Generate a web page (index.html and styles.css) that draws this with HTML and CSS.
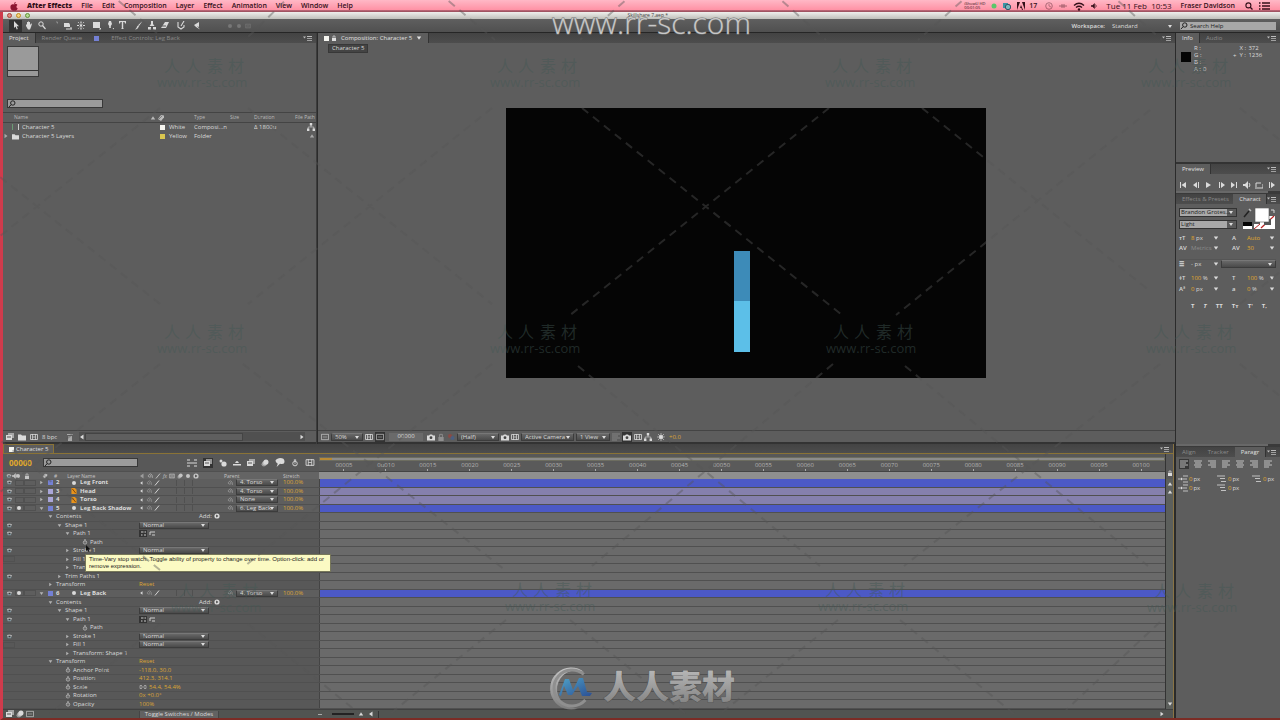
FILE: index.html
```html
<!DOCTYPE html>
<html lang="en">
<head>
<meta charset="utf-8">
<title>Skillshare 7.aep</title>
<link rel="stylesheet" href="styles.css">
</head>
<body>
<svg class="sprite" aria-hidden="true">
  <symbol id="right" viewBox="0 0 6 6"><path d="M1.5 .8 4.5 3 1.5 5.2z"/></symbol>
  <symbol id="down" viewBox="0 0 6 6"><path d="M.8 1.5h4.4L3 4.8z"/></symbol>
  <symbol id="up" viewBox="0 0 6 6"><path d="M.8 4.5h4.4L3 1.2z"/></symbol>
  <symbol id="left" viewBox="0 0 6 6"><path d="M4.5 .5v5L1 3z"/></symbol>
  <symbol id="eye" viewBox="0 0 8 6"><path d="M1 1.2Q4-.4 7 1.6V3H1z" opacity=".8"/><path d="M1 3h5v2H2z" fill="#8ba3ae"/><circle cx="4" cy="3" r="1" fill="#333"/></symbol>
  <symbol id="sound" viewBox="0 0 8 8"><path d="M0 3h2l3-3v8L2 5H0z"/><path d="M6 2q2 2 0 4" fill="none" stroke="currentColor"/></symbol>
  <symbol id="lock" viewBox="0 0 6 6"><path d="M1 3h4v3H1z"/><path d="M2 3V1h2v2" fill="none" stroke="currentColor" stroke-width=".7"/></symbol>
  <symbol id="watch" viewBox="0 0 6 7"><circle cx="3" cy="4" r="2" fill="none" stroke="currentColor" stroke-width=".8"/><path d="M2 .5h2v1H2zM2.7 2.5h.6v2h-.6z"/></symbol>
  <symbol id="dot" viewBox="0 0 6 6"><circle cx="3" cy="3" r="2"/></symbol>
  <symbol id="ai" viewBox="0 0 6 7"><path fill="#e8941c" d="M0 0h4l2 2v5H0z"/><path d="M1 1l4 5" stroke="#713b09"/></symbol>
  <symbol id="whip" viewBox="0 0 6 6"><path d="M3 3q1-1 1 .3T2 4 2 1.6t3 .4.2 3" fill="none" stroke="currentColor" stroke-width=".6"/></symbol>
  <symbol id="add" viewBox="0 0 6 6"><circle cx="3" cy="3" r="2.6"/><path d="M2.2 1.4 4.4 3 2.2 4.6z" fill="#444"/></symbol>
  <symbol id="find" viewBox="0 0 8 8"><circle cx="4.8" cy="3" r="2.2" fill="none" stroke="currentColor"/><path d="M3.2 4.6.8 7.2" stroke="currentColor"/></symbol>
  <symbol id="fly" viewBox="0 0 9 6"><path d="M0 1.5h3L1.5 3.5zM4 1h5v1H4zM4 3h5v.8H4zM4 5h5v.8H4z"/></symbol>
  <symbol id="tag" viewBox="0 0 8 8"><path d="M1 5 4 1l3 .5v2L4 7z"/><path d="M2 5l3-3" stroke="#555" stroke-width=".6"/></symbol>
  <symbol id="folder" viewBox="0 0 8 7"><path d="M0 1h3l1 1h4v5H0z"/></symbol>
  <symbol id="tree" viewBox="0 0 8 8"><path d="M2.8 0h2.4v2.4H2.8zM0 5.5h2.4V8H0zM5.6 5.5H8V8H5.6z"/><path d="M4 2v2M1.2 6V4h5.6v2" fill="none" stroke="currentColor" stroke-width=".6"/></symbol>
  <symbol id="film" viewBox="0 0 8 8"><path d="M.5 1.500h7v5h-7z" fill="none" stroke="currentColor" stroke-width=".8"/><path d="M2.500 1v6M5.500 1v6M2.500 4h3" stroke="currentColor" stroke-width=".7"/></symbol>
  <symbol id="solids" viewBox="0 0 8 8"><path d="M2 0h6v5H2z" opacity=".6"/><path d="M0 2h6v5H0z"/><path d="M1 4h4" stroke="#555"/></symbol>
  <symbol id="screen" viewBox="0 0 9 8"><path d="M.5 1h8v6h-8z" fill="none" stroke="currentColor" stroke-width=".7"/><path d="M2 4h5" stroke="currentColor" stroke-width=".5"/></symbol>
  <symbol id="blur" viewBox="0 0 8 8"><circle cx="5" cy="3" r="2.5"/><circle cx="4" cy="4" r="2.5" opacity=".6"/><circle cx="2.8" cy="5.2" r="2.3" opacity=".5"/></symbol>
  <symbol id="cam" viewBox="0 0 8 7"><path d="M0 2h2l1-1h2l1 1h2v5H0z"/><circle cx="4" cy="4.2" r="1.4" fill="#444"/></symbol>
  <symbol id="slash" viewBox="0 0 6 7"><path d="M.6 6.4 5.4.6" stroke="currentColor" stroke-width="1.1"/></symbol>
  <symbol id="lines" viewBox="0 0 8 8"><path d="M0 1h8M0 3h6M0 5h8M0 7h5" stroke="currentColor" stroke-width=".8"/></symbol>
  <symbol id="lines-c" viewBox="0 0 8 8"><path d="M0 1h8M1 3h6M0 5h8M1 7h6" stroke="currentColor" stroke-width=".8"/></symbol>
  <symbol id="lines-r" viewBox="0 0 8 8"><path d="M0 1h8M2 3h6M0 5h8M3 7h5" stroke="currentColor" stroke-width=".8"/></symbol>
  <symbol id="ind-l" viewBox="0 0 10 8"><path d="M0 4h4M5 1h5M5 4h4M5 7h5" stroke="currentColor" stroke-width=".8"/><path d="M3 2.5 5 4 3 5.5z"/></symbol>
  <symbol id="ind-t" viewBox="0 0 10 8"><path d="M0 1h8M3 3.5h5M4 6.5h5" stroke="currentColor" stroke-width=".8"/></symbol>
  <symbol id="paths" viewBox="0 0 16 7"><path fill="#333" d="M0 0h8v7H0z"/><path d="M2 2h2.5M5.5 2H7M2 5h1.5M5 5h2M11 2h5M11 2v3M13 5h3" stroke="#ccc"/></symbol>
</svg>

<header class="menubar">
  <svg class="apple" viewBox="0 0 8 9"><path fill="#8c1430" d="M4 2.6C5.5 1.6 7 2.2 7.4 3 6 4 6.200 5.700 7.700 6.300 7 8.500 5.800 9.200 4 8.400 2 9.300.4 7.400.4 5 .4 2.600 2.500 1.800 4 2.600zM4 2C4 .8 5 0 5.800 0 5.800 1.200 5 2 4 2z"/></svg>
  <nav class="menus">
    <button class="strong">After Effects</button><button>File</button><button>Edit</button><button>Composition</button><button>Layer</button><button>Effect</button><button>Animation</button><button>View</button><button>Window</button><button>Help</button>
  </nav>
  <div class="status">
    <span class="rec">iShowU HD<br>00:01:05</span>
    <svg class="i6" viewBox="0 0 6 6"><circle cx="3" cy="3" r="2.5" fill="#5cc66a"/></svg>
    <svg class="i8" viewBox="0 0 8 8"><path fill="#3b93a4" d="M0 1h5v5H0z"/><circle cx="5" cy="5" r="2.700" fill="#79b8be" stroke="#356"/></svg>
    <span class="adobe"><svg class="i8" viewBox="0 0 8 8"><path d="M0 0h3L0 8zM5 0h3v8zM4 3l2 5H5L4.400 6H3z"/></svg>17</span>
    <svg class="i8 pale" viewBox="0 0 8 8"><circle cx="4" cy="4" r="3.300" fill="none" stroke="currentColor" stroke-width=".8"/><path d="M4 2v2l2 1" fill="none" stroke="currentColor" stroke-width=".7"/></svg>
    <svg class="i8 pale" viewBox="0 0 8 8"><path d="M0 4h8M3 2v4M5 2v4" stroke="currentColor" stroke-width=".9"/></svg>
    <svg class="wifi" viewBox="0 0 12 9"><path d="M1 3.500q5-4.500 10 0M3 5.500q3-2.500 6 0" fill="none" stroke="currentColor" stroke-width="1.400"/><circle cx="6" cy="7.500" r="1.200"/></svg>
    <svg class="i6"><use href="#sound"/></svg>
    <span class="clock">Tue 11 Feb&nbsp; 10:53</span>
    <span class="user">Fraser Davidson</span>
    <svg class="i8" viewBox="0 0 8 8"><circle cx="3.400" cy="3.400" r="2.500" fill="none" stroke="currentColor" stroke-width="1.100"/><path d="M5.200 5.200 7.500 7.500" stroke="currentColor" stroke-width="1.300"/></svg>
    <svg class="list" viewBox="0 0 11 8"><path d="M0 1h1.500M3 1h8M0 4h1.500M3 4h8M0 7h1.500M3 7h8" stroke="currentColor" stroke-width="1.300"/></svg>
  </div>
</header>

<div class="window">
  <div class="titlebar">
    <span class="lights"><i class="red"></i><i class="amber"></i><i class="green"></i></span>
    <span class="filename">Skillshare 7.aep *</span>
  </div>

  <div class="toolbar">
    <button class="tool on" aria-label="Selection"><svg viewBox="0 0 8 9"><path d="M2 0v7l1.600-1.400L4.700 8.500l1.100-.5L4.700 5.200H7z"/></svg></button>
    <button class="tool" aria-label="Hand"><svg viewBox="0 0 8 9"><path d="M1 3l1 1V1h1v2.500V.4h1v3V1h1v3l1-1.500 1 .3L6 6 5 8.500H3L1 5z"/></svg></button>
    <button class="tool" aria-label="Zoom"><svg viewBox="0 0 8 9"><circle cx="3" cy="3" r="2.200" fill="none" stroke="currentColor"/><path d="M4.500 4.500 7.500 8" stroke="currentColor" stroke-width="1.200"/></svg></button>
    <button class="tool dim" aria-label="Rotate"><svg viewBox="0 0 8 9"><path d="M5 1h1.500v1.500" stroke="currentColor" fill="none"/></svg></button>
    <button class="tool" aria-label="Camera"><svg viewBox="0 0 8 9"><path d="M0 2h5l1 1.500V6H0z"/><path d="M2 8h6M7 6v2" stroke="currentColor"/></svg></button>
    <button class="tool" aria-label="Pan behind"><svg viewBox="0 0 8 9"><path d="M0 4.500h8M4 .5v8" stroke="currentColor" stroke-width="1.200" stroke-dasharray="2 1"/><path d="M1 1l6 7M7 1 1 8" stroke="currentColor" stroke-width=".8" stroke-dasharray="1.500 1"/></svg></button>
    <button class="tool gap" aria-label="Rectangle"><svg viewBox="0 0 8 9"><path d="M0 1h7v6H0zM7 7h1v1.500H6z"/></svg></button>
    <button class="tool" aria-label="Pen"><svg viewBox="0 0 8 9"><path d="M3 0h2l1 3-1.200 2v2H3.200V5L2 3zM6.500 7H8v1.500z"/></svg></button>
    <button class="tool" aria-label="Type"><svg viewBox="0 0 8 9"><path d="M0 0h7v2.500H6L5.500 1H4.200v6.200L5 8H2l.8-.8V1H1.500L1 2.500H0z"/></svg></button>
    <button class="tool gap" aria-label="Brush"><svg viewBox="0 0 8 9"><path d="M7.500 0 4 5 3 4.200zM3 4.500 4 5.500Q3 8 0 8.500 2 7 2 5.500z"/></svg></button>
    <button class="tool" aria-label="Clone stamp"><svg viewBox="0 0 8 9"><path d="M3 0h2v3l1.500 2H1.500L3 3zM0 6h3v2.500H0zM5 6h3v2.500H5z"/></svg></button>
    <button class="tool" aria-label="Eraser"><svg viewBox="0 0 8 9"><path d="M4 1h4L5 7H0z"/><path d="M1 5h4" stroke="#555"/></svg></button>
    <button class="tool gap" aria-label="Roto brush"><svg viewBox="0 0 8 9"><path d="M1 1v5l3 2 3-2V4M7 0 4 5" fill="none" stroke="currentColor" stroke-width="1.100"/></svg></button>
    <button class="tool gap" aria-label="Puppet pin"><svg viewBox="0 0 8 9"><path d="M1 4 6 1v5L4 5 7 8.500 3 6z"/></svg></button>
    <span class="axes"><svg class="i6"><use href="#dot"/></svg><svg class="i6"><use href="#dot"/></svg><svg class="i6"><use href="#film"/></svg></span>
    <label class="space" for="ws">Workspace:</label>
    <span class="drop ws"><select id="ws"><option>Standard</option></select></span>
    <label class="help"><svg class="i8"><use href="#find"/></svg><input type="search" value="Search Help" aria-label="Search Help"></label>
  </div>

  <main class="desk">
    <section class="panel project">
      <div class="tabs">
        <button class="tab on">Project</button><button class="tab">Render Queue</button>
        <button class="tab"><i class="sw blue"></i></button><button class="tab">Effect Controls: Leg Back</button>
        <svg class="fly"><use href="#fly"/></svg>
      </div>
      <div class="preview-thumb"><i class="thumb"></i></div>
      <label class="search"><svg class="i8"><use href="#find"/></svg><input type="search" aria-label="Search project"></label>
      <table class="files">
        <colgroup><col class="c-name"><col class="c-label"><col class="c-type"><col class="c-size"><col class="c-dur"><col></colgroup>
        <thead><tr><th class="pad">Name</th><th><svg class="i6"><use href="#up"/></svg><svg class="i8"><use href="#tag"/></svg></th><th>Type</th><th>Size</th><th>Duration</th><th>File Path</th></tr></thead>
        <tbody>
          <tr><td><span class="comp-ic"></span>Character 5</td><td><i class="sw white"></i>White</td><td>Composi...n</td><td></td><td>Δ 1800u</td><td class="end"><svg class="i8"><use href="#tree"/></svg></td></tr>
          <tr><td><svg class="i6 faint"><use href="#right"/></svg><svg class="i8 fold"><use href="#folder"/></svg>Character 5 Layers</td><td><i class="sw yellow"></i>Yellow</td><td>Folder</td><td></td><td></td><td class="end"><svg class="i6 faint"><use href="#up"/></svg></td></tr>
        </tbody>
      </table>
      <div class="footbar">
        <svg class="i8"><use href="#solids"/></svg><svg class="i8"><use href="#folder"/></svg><svg class="i8"><use href="#film"/></svg>
        <button>8 bpc</button><svg class="i8 bin" viewBox="0 0 8 8"><path d="M1 1h6v1H1zM2 3h4v5H2z" opacity=".6"/></svg>
        <span class="scroll"><svg class="i6"><use href="#left"/></svg><i></i><svg class="i6"><use href="#right"/></svg></span>
      </div>
    </section>

    <section class="panel comp">
      <div class="tabs">
        <button class="tab on"><i class="sw white"></i><svg class="i6"><use href="#lock"/></svg><span class="sp">Composition: Character 5</span> <svg class="i6 sp"><use href="#down"/></svg></button>
        <svg class="fly"><use href="#fly"/></svg>
      </div>
      <div class="crumbs"><button>Character 5</button></div>
      <div class="viewer"><div class="canvas"><div class="leg"></div></div></div>
      <div class="footbar">
        <svg class="i8"><use href="#screen"/></svg>
        <span class="drop w30"><select aria-label="Magnification"><option>50%</option></select></span>
        <svg class="i8"><use href="#film"/></svg><span class="boxed"><svg class="i8"><use href="#screen"/></svg></span>
        <button class="frame">00000</button>
        <svg class="i8"><use href="#cam"/></svg><svg class="i8 dim"><use href="#lock"/></svg><svg class="i8" viewBox="0 0 8 8"><circle cx="3" cy="3" r="2" fill="#8b4a45"/><circle cx="5.500" cy="5" r="2" fill="#4b5f80"/></svg>
        <span class="drop w41"><select aria-label="Resolution"><option>(Half)</option></select></span>
        <svg class="i8"><use href="#cam"/></svg><svg class="i8"><use href="#film"/></svg>
        <span class="drop w52"><select aria-label="View"><option>Active Camera</option></select></span>
        <span class="drop w34"><select aria-label="View layout"><option>1 View</option></select></span>
        <svg class="i8 dim"><use href="#lines"/></svg><span class="boxed"><svg class="i8"><use href="#cam"/></svg></span><svg class="i8"><use href="#film"/></svg><svg class="i8"><use href="#tree"/></svg>
        <svg class="i8 sun" viewBox="0 0 8 8"><circle cx="4" cy="4" r="2"/><path d="M4 0v8M0 4h8M1 1l6 6M7 1 1 7" stroke="currentColor" stroke-width=".6"/></svg><span class="gold">+0.0</span>
      </div>
    </section>

    <aside class="panel side">
      <div class="tabs"><button class="tab on">Info</button><button class="tab">Audio</button><svg class="fly"><use href="#fly"/></svg></div>
      <div class="info">
        <i class="black"></i>
        <dl><dt>R :</dt><dd></dd><dt>G :</dt><dd></dd><dt>B :</dt><dd></dd><dt>A :</dt><dd>0</dd></dl>
        <span class="cross">+</span>
        <dl class="xy"><dt>X :</dt><dd>372</dd><dt>Y :</dt><dd>1236</dd></dl>
      </div>
      <div class="tabs ruled"><button class="tab on">Preview</button><svg class="fly"><use href="#fly"/></svg></div>
      <div class="transport">
        <button aria-label="First frame"><svg viewBox="0 0 8 8"><path d="M0 1h1v6H0zM6 1v6L1.500 4z"/></svg></button>
        <button aria-label="Previous frame"><svg viewBox="0 0 8 8"><path d="M4 1v6L0 4zM5 1h1v6H5z"/></svg></button>
        <button aria-label="Play"><svg viewBox="0 0 8 8"><path d="M1 1v6l5-3z"/></svg></button>
        <button aria-label="Next frame"><svg viewBox="0 0 8 8"><path d="M1 1h1v6H1zM3 1v6l4-3z"/></svg></button>
        <button aria-label="Last frame"><svg viewBox="0 0 8 8"><path d="M1 1v6l4-3zM6 1h1v6H6z"/></svg></button>
        <button aria-label="Audio"><svg><use href="#sound"/></svg></button>
        <button aria-label="Loop"><svg viewBox="0 0 8 8"><path d="M1 6V2h5M0 7h8V3" fill="none" stroke="currentColor"/></svg></button>
        <button aria-label="RAM preview"><svg viewBox="0 0 8 8"><path d="M1 1h1v6H1zM3 1v6l4-3z"/></svg></button>
      </div>
      <div class="thinbar"><i></i></div>
      <div class="tabs"><button class="tab">Effects &amp; Presets</button><button class="tab on">Charact</button><svg class="fly"><use href="#fly"/></svg></div>
      <div class="char">
        <div class="fonts">
          <div class="faces">
            <span class="drop pale-drop"><select aria-label="Font family"><option>Brandon Grotes...</option></select></span>
            <span class="drop pale-drop"><select aria-label="Font style"><option>Light</option></select></span>
          </div>
          <svg class="swatches" viewBox="0 0 34 22"><path d="M2 9 7 3" stroke="#222" stroke-width="1.500"/><path d="M7 1 9 3" stroke="#bbb" stroke-width="1.500"/><path fill="#fff" d="M18 8h15v13H18z"/><path d="M19 20 32 8" stroke="#b22" stroke-width="1.200"/><path fill="#555" d="M22 11h7v6H22z"/><path fill="#fff" stroke="#555" stroke-width=".6" d="M13 0h14v14H13z"/><path fill="#050505" d="M1 14h9v4H1z"/><path fill="#fff" d="M1 18h9v3H1zM12 16h6v5H12z"/><path d="M12 21l6-5" stroke="#b22"/><path d="M29 2h3v3" fill="none" stroke="#ddd"/></svg>
        </div>
        <div class="pairs">
          <b>тT</b><span><u>8</u> px</span><svg class="i6"><use href="#down"/></svg><b>A</b><span><u>Auto</u></span><svg class="i6"><use href="#down"/></svg>
          <b>AV</b><span class="faded">Metrics</span><svg class="i6"><use href="#down"/></svg><b>AV</b><span><u>30</u></span><svg class="i6"><use href="#down"/></svg>
        </div>
        <div class="stroke"><b>☰</b><span>- px</span><svg class="i6"><use href="#down"/></svg><span class="drop"><select aria-label="Stroke order"><option></option></select></span></div>
        <div class="pairs low">
          <b>‡T</b><span><u>100</u> %</span><svg class="i6"><use href="#down"/></svg><b>T</b><span><u>100</u> %</span><svg class="i6"><use href="#down"/></svg>
          <b>Aª</b><span><u>0</u> px</span><svg class="i6"><use href="#down"/></svg><b>a</b><span><u>0</u> %</span><svg class="i6"><use href="#down"/></svg>
        </div>
        <div class="faux"><button>T</button><button><em>T</em></button><button>TT</button><button>Tт</button><button>T'</button><button>T,</button></div>
      </div>
    </aside>
  </main>

  <div class="lower">
    <section class="timeline">
      <div class="tabs"><button class="tab on"><i class="sw white"></i>Character 5</button><svg class="fly"><use href="#fly"/></svg></div>
      <div class="thead">
        <div class="left">
          <div class="tools">
            <span class="time">00000</span>
            <label class="search"><svg class="i8"><use href="#find"/></svg><input type="search" aria-label="Search layers"></label>
            <span class="icons">
              <svg viewBox="0 0 10 8"><path d="M0 1h3M0 4h10M0 7h3M7 1h3M7 7h3" stroke="currentColor"/></svg><span class="boxed"><svg class="i8"><use href="#solids"/></svg></span><svg class="i8" viewBox="0 0 8 8"><circle cx="2" cy="2" r="1.500"/><circle cx="5" cy="5" r="2.600"/></svg>
              <svg class="i8" viewBox="0 0 8 8"><path d="M0 5h8v1.500H0zM2 4q2-4 4 0z"/></svg><svg class="i8"><use href="#solids"/></svg><svg class="i8"><use href="#blur"/></svg>
              <svg class="i10" viewBox="0 0 8 8"><path d="M4 0q4 0 4 3T4 5L1 8 2 5Q0 4 0 2.500T4 0z"/></svg><svg class="i8"><use href="#watch"/></svg><svg class="i10"><use href="#film"/></svg>
            </span>
          </div>
          <div class="cols row-grid">
            <span class="av"><svg class="i6"><use href="#eye"/></svg><svg class="i6"><use href="#sound"/></svg></span><span><svg class="i6"><use href="#dot"/></svg></span><span><svg class="i6"><use href="#lock"/></svg></span>
            <span class="nm"><svg class="i6"><use href="#tag"/></svg><span>#</span><span class="title">Layer Name</span></span>
            <span class="sws"><svg class="i6 faint"><use href="#left"/></svg><svg class="i6"><use href="#whip"/></svg><svg class="i6"><use href="#slash"/></svg><em>fx</em><svg class="i6"><use href="#film"/></svg><svg class="i6"><use href="#blur"/></svg><svg class="i6"><use href="#dot"/></svg><svg class="i6"><use href="#add"/></svg></span>
            <span>Parent</span><span>Stretch</span>
          </div>
        </div>
        <div class="ruler">
          <div class="work"></div>
          <div class="ticks"><span>00005</span><span>0u010</span><span>00015</span><span>00020</span><span>00025</span><span>00030</span><span>00035</span><span>00040</span><span>00045</span><span>00050</span><span>00055</span><span>00060</span><span>00065</span><span>00070</span><span>00075</span><span>00080</span><span>00085</span><span>00090</span><span>00095</span><span>00100</span></div>
          <div class="band"></div>
        </div>
        <div class="gutter"><svg class="i6"><use href="#lock"/></svg></div>
      </div>

      <div class="body">
        <div class="rows">
          <div class="row row-grid layer"><span><svg class="eye"><use href="#eye"/></svg></span><span class="cell"></span><span class="cell"></span><span class="nm l0"><svg class="i6"><use href="#right"/></svg><i class="sw blue"></i><b>2</b><svg class="i6"><use href="#dot"/></svg><strong>Leg Front</strong></span><span class="sws"><svg class="i6"><use href="#left"/></svg><svg class="i6"><use href="#whip"/></svg><svg class="i6"><use href="#slash"/></svg><i class="cells"></i></span><span class="par"><svg class="i6"><use href="#whip"/></svg><span class="drop"><select aria-label="Parent of Leg Front"><option>4. Torso</option></select></span></span><span class="gold">100.0%</span><span class="lane bar"></span></div>
          <div class="row row-grid layer"><span><svg class="eye"><use href="#eye"/></svg></span><span class="cell"></span><span class="cell"></span><span class="nm l0"><svg class="i6"><use href="#right"/></svg><i class="sw lilac"></i><b>3</b><svg class="i6"><use href="#ai"/></svg><strong>Head</strong></span><span class="sws"><svg class="i6"><use href="#left"/></svg><svg class="i6"><use href="#whip"/></svg><svg class="i6"><use href="#slash"/></svg><i class="cells"></i></span><span class="par"><svg class="i6"><use href="#whip"/></svg><span class="drop"><select aria-label="Parent of Head"><option>4. Torso</option></select></span></span><span class="gold">100.0%</span><span class="lane soft"></span></div>
          <div class="row row-grid layer"><span><svg class="eye"><use href="#eye"/></svg></span><span class="cell"></span><span class="cell"></span><span class="nm l0"><svg class="i6"><use href="#right"/></svg><i class="sw lilac"></i><b>4</b><svg class="i6"><use href="#ai"/></svg><strong>Torso</strong></span><span class="sws"><svg class="i6"><use href="#left"/></svg><svg class="i6"><use href="#whip"/></svg><svg class="i6"><use href="#slash"/></svg><i class="cells"></i></span><span class="par"><svg class="i6"><use href="#whip"/></svg><span class="drop"><select aria-label="Parent of Torso"><option>None</option></select></span></span><span class="gold">100.0%</span><span class="lane soft"></span></div>
          <div class="row row-grid layer"><span><svg class="eye"><use href="#eye"/></svg></span><span class="cell"><svg class="i6"><use href="#dot"/></svg></span><span class="cell"></span><span class="nm l0"><svg class="i6"><use href="#down"/></svg><i class="sw blue"></i><b>5</b><svg class="i6"><use href="#dot"/></svg><strong>Leg Back Shadow</strong></span><span class="sws"><svg class="i6"><use href="#left"/></svg><svg class="i6"><use href="#whip"/></svg><svg class="i6"><use href="#slash"/></svg><i class="cells"></i></span><span class="par"><svg class="i6"><use href="#whip"/></svg><span class="drop"><select aria-label="Parent of Leg Back Shadow"><option>6. Leg Back</option></select></span></span><span class="gold">100.0%</span><span class="lane bar"></span></div>
          <div class="row row-grid"><span></span><span></span><span></span><span class="nm l1"><svg class="i6"><use href="#down"/></svg>Contents</span><span class="adds">Add: <svg class="i6"><use href="#add"/></svg></span><span></span><span></span><span class="lane"></span></div>
          <div class="row row-grid"><span><svg class="eye"><use href="#eye"/></svg></span><span></span><span></span><span class="nm l2"><svg class="i6"><use href="#down"/></svg>Shape 1</span><span class="drop mode"><select aria-label="Shape 1 mode"><option>Normal</option></select></span><span></span><span></span><span class="lane"></span></div>
          <div class="row row-grid"><span><svg class="eye"><use href="#eye"/></svg></span><span></span><span></span><span class="nm l3"><svg class="i6"><use href="#down"/></svg>Path 1</span><span><svg class="paths"><use href="#paths"/></svg></span><span></span><span></span><span class="lane"></span></div>
          <div class="row row-grid"><span></span><span></span><span></span><span class="nm l4"><svg class="i6 sw-ic"><use href="#watch"/></svg>Path</span><span></span><span></span><span></span><span class="lane"></span></div>
          <div class="row row-grid"><span><svg class="eye"><use href="#eye"/></svg></span><span></span><span></span><span class="nm l3"><svg class="i6"><use href="#right"/></svg>Stroke 1</span><span class="drop mode"><select aria-label="Stroke 1 mode"><option>Normal</option></select></span><span></span><span></span><span class="lane"></span></div>
          <div class="row row-grid"><span class="cell"></span><span></span><span></span><span class="nm l3"><svg class="i6"><use href="#right"/></svg>Fill 1</span><span></span><span></span><span></span><span class="lane"></span></div>
          <div class="row row-grid"><span></span><span></span><span></span><span class="nm l3"><svg class="i6"><use href="#right"/></svg>Transform: Shape 1</span><span></span><span></span><span></span><span class="lane"></span></div>
          <div class="row row-grid"><span><svg class="eye"><use href="#eye"/></svg></span><span></span><span></span><span class="nm l2"><svg class="i6"><use href="#right"/></svg>Trim Paths 1</span><span></span><span></span><span></span><span class="lane"></span></div>
          <div class="row row-grid"><span></span><span></span><span></span><span class="nm l1"><svg class="i6"><use href="#right"/></svg>Transform</span><span class="gold">Reset</span><span></span><span></span><span class="lane"></span></div>
          <div class="row row-grid layer"><span><svg class="eye"><use href="#eye"/></svg></span><span class="cell"><svg class="i6"><use href="#dot"/></svg></span><span class="cell"></span><span class="nm l0"><svg class="i6"><use href="#down"/></svg><i class="sw blue"></i><b>6</b><svg class="i6"><use href="#dot"/></svg><strong>Leg Back</strong></span><span class="sws"><svg class="i6"><use href="#left"/></svg><svg class="i6"><use href="#whip"/></svg><svg class="i6"><use href="#slash"/></svg><i class="cells"></i></span><span class="par"><svg class="i6"><use href="#whip"/></svg><span class="drop"><select aria-label="Parent of Leg Back"><option>4. Torso</option></select></span></span><span class="gold">100.0%</span><span class="lane bar"></span></div>
          <div class="row row-grid"><span></span><span></span><span></span><span class="nm l1"><svg class="i6"><use href="#down"/></svg>Contents</span><span class="adds">Add: <svg class="i6"><use href="#add"/></svg></span><span></span><span></span><span class="lane"></span></div>
          <div class="row row-grid"><span><svg class="eye"><use href="#eye"/></svg></span><span></span><span></span><span class="nm l2"><svg class="i6"><use href="#down"/></svg>Shape 1</span><span class="drop mode"><select aria-label="Leg Back Shape 1 mode"><option>Normal</option></select></span><span></span><span></span><span class="lane"></span></div>
          <div class="row row-grid"><span><svg class="eye"><use href="#eye"/></svg></span><span></span><span></span><span class="nm l3"><svg class="i6"><use href="#down"/></svg>Path 1</span><span><svg class="paths"><use href="#paths"/></svg></span><span></span><span></span><span class="lane"></span></div>
          <div class="row row-grid"><span></span><span></span><span></span><span class="nm l4"><svg class="i6 sw-ic"><use href="#watch"/></svg>Path</span><span></span><span></span><span></span><span class="lane"></span></div>
          <div class="row row-grid"><span><svg class="eye"><use href="#eye"/></svg></span><span></span><span></span><span class="nm l3"><svg class="i6"><use href="#right"/></svg>Stroke 1</span><span class="drop mode"><select aria-label="Leg Back Stroke 1 mode"><option>Normal</option></select></span><span></span><span></span><span class="lane"></span></div>
          <div class="row row-grid"><span class="cell"></span><span></span><span></span><span class="nm l3"><svg class="i6"><use href="#right"/></svg>Fill 1</span><span class="drop mode"><select aria-label="Leg Back Fill 1 mode"><option>Normal</option></select></span><span></span><span></span><span class="lane"></span></div>
          <div class="row row-grid"><span></span><span></span><span></span><span class="nm l3"><svg class="i6"><use href="#right"/></svg>Transform: Shape 1</span><span></span><span></span><span></span><span class="lane"></span></div>
          <div class="row row-grid"><span></span><span></span><span></span><span class="nm l1"><svg class="i6"><use href="#down"/></svg>Transform</span><span class="gold">Reset</span><span></span><span></span><span class="lane"></span></div>
          <div class="row row-grid"><span></span><span></span><span></span><span class="nm l3"><svg class="i6 sw-ic"><use href="#watch"/></svg>Anchor Point</span><span class="gold">-118.0, 30.0</span><span></span><span></span><span class="lane"></span></div>
          <div class="row row-grid"><span></span><span></span><span></span><span class="nm l3"><svg class="i6 sw-ic"><use href="#watch"/></svg>Position</span><span class="gold">412.3, 314.1</span><span></span><span></span><span class="lane"></span></div>
          <div class="row row-grid"><span></span><span></span><span></span><span class="nm l3"><svg class="i6 sw-ic"><use href="#watch"/></svg>Scale</span><span class="gold"><svg class="chain" viewBox="0 0 8 6"><path d="M3 1.500H1v3h2M5 1.500h2v3H5M2 3h4" fill="none" stroke="#ccc" stroke-width=".6"/></svg>54.4, 54.4%</span><span></span><span></span><span class="lane"></span></div>
          <div class="row row-grid"><span></span><span></span><span></span><span class="nm l3"><svg class="i6 sw-ic"><use href="#watch"/></svg>Rotation</span><span class="gold">0x +0.0°</span><span></span><span></span><span class="lane"></span></div>
          <div class="row row-grid"><span></span><span></span><span></span><span class="nm l3"><svg class="i6 sw-ic"><use href="#watch"/></svg>Opacity</span><span class="gold">100%</span><span></span><span></span><span class="lane"></span></div>
        </div>
        <div class="vscroll"><svg class="i6"><use href="#up"/></svg><svg class="i6"><use href="#up"/></svg><i></i><svg class="i6"><use href="#down"/></svg></div>
      </div>

      <div class="tfoot">
        <span class="toggles"><svg class="i8"><use href="#solids"/></svg><svg class="i8"><use href="#blur"/></svg><svg class="i8"><use href="#screen"/></svg></span>
        <button>Toggle Switches / Modes</button>
        <span class="hscroll"><i class="small"></i><i class="large"></i><svg class="i6"><use href="#up"/></svg><svg class="i6"><use href="#left"/></svg><i class="track"></i><svg class="i6"><use href="#right"/></svg></span>
      </div>
      <div class="tooltip" role="tooltip">Time-Vary stop watch. Toggle ability of property to change over time. Option-click: add or remove expression.</div>
      <svg class="pointer" viewBox="0 0 5 7"><path d="M0 0v6l1.500-1.200L2.500 7l1-.5-1-2H4.500z" fill="#111"/></svg>
    </section>

    <aside class="panel side para">
      <div class="thinbar"><i></i></div>
      <div class="tabs"><button class="tab">Align</button><button class="tab">Tracker</button><button class="tab on">Paragr</button><svg class="fly"><use href="#fly"/></svg></div>
      <div class="aligns">
        <button class="on" aria-label="Left"><svg><use href="#lines"/></svg></button><button aria-label="Centre"><svg><use href="#lines-c"/></svg></button><button aria-label="Right"><svg><use href="#lines-r"/></svg></button><button aria-label="Justify left"><svg><use href="#lines"/></svg></button><button aria-label="Justify centre"><svg><use href="#lines-c"/></svg></button><button aria-label="Justify right"><svg><use href="#lines-r"/></svg></button><button aria-label="Justify all"><svg><use href="#lines"/></svg></button>
      </div>
      <div class="indents">
        <span><svg><use href="#ind-l"/></svg><u>0</u> px</span><span><svg><use href="#ind-t"/></svg><u>0</u> px</span><span><svg><use href="#ind-t"/></svg><u>0</u> px</span>
        <span><svg><use href="#ind-l"/></svg><u>0</u> px</span><span><svg><use href="#ind-t"/></svg><u>0</u> px</span>
      </div>
    </aside>
  </div>
</div>

<svg class="overlay" viewBox="0 0 1280 720" aria-hidden="true">
  <defs>
    <linearGradient id="silver" x1="0" y1="0" x2="0" y2="1"><stop offset="0" stop-color="#c4c4c4"/><stop offset="1" stop-color="#7c7c7c"/></linearGradient>
    <linearGradient id="ink" x1="0" y1="0" x2="1" y2="1"><stop offset="0" stop-color="#4fa3c8"/><stop offset="1" stop-color="#2b4f94"/></linearGradient>
  </defs>
  <g class="dashes">
    <path d="M108-8 165 40M294-8 245 40M438-8 495 40M635-8 580 40M772-8 826 40M972-8 918 40M1108-8 1162 40"/>
    <path d="M248 108 492 304M492 108 248 304M582 108 842 315M829 108 569 316M922 108 1150 291M1150 110 896 315M1240 108 1280 140M1240 304 1280 272M160 108 0 236M160 304 0 177"/>
    <path d="M243 364 505 570M492 364 245 566M578 366 820 566M833 364 592 566M905 366 1148 566M1160 364 904 566M160 364 0 492M160 570 0 440M1240 364 1280 396"/>
    <path d="M248 624 360 714M506 620 390 714M570 620 686 714M838 620 720 714M900 620 1014 714M1160 622 1066 710M160 624 50 714"/>
  </g>
  <g class="marks">
    <g id="m1"><text class="cn" x="164 185 207 228" y="72">人人素材</text><text class="url" x="157" y="87">www.rr-sc.com</text></g>
    <use href="#m1" x="333"/><use href="#m1" x="668"/><use href="#m1" x="984"/>
    <use href="#m1" y="266"/><use href="#m1" x="333" y="266"/><use href="#m1" x="669" y="266"/><use href="#m1" x="989" y="266"/>
    <use href="#m1" x="14" y="525"/><use href="#m1" x="348" y="524"/><use href="#m1" x="661" y="524"/><use href="#m1" x="990" y="525"/>
  </g>
  <text class="site" x="552" y="34">www.rr-sc.com</text>
  <g transform="translate(549 666)">
    <path d="M35 6A21 21 0 1 0 30 42 19 19 0 1 1 35 6z" fill="url(#silver)"/>
    <circle cx="23" cy="22" r="18" fill="none" stroke="#8f8f8f" stroke-width="3" stroke-dasharray="84 30" transform="rotate(42 23 22)"/>
    <path d="M10 29 16 13h4l4 11 6-12h4l4 14 5 1-2 3h-8l-4-10-6 9h-4l-4-9-3 10z" fill="url(#ink)"/>
  </g>
  <text class="brand" x="603" y="699">人人素材</text>
</svg>
</body>
</html>
```
FILE: styles.css
```css
* { box-sizing: border-box; }
body {
  margin: 0;
  height: 100vh;
  display: flex;
  flex-direction: column;
  overflow: hidden;
  position: relative;
  background: #5d5d5d;
  color: #dadada;
  font: 500 6px/8px "Open Sans", "Noto Sans", sans-serif;
}
button, input, select { font: inherit; color: inherit; border: 0; padding: 0; margin: 0; background: none; min-width: 0; }
svg { fill: currentColor; flex: none; display: block; }
u { text-decoration: none; color: #e0a92c; }
.sprite { position: absolute; width: 0; height: 0; }
.i6 { width: 6px; height: 6px; }
.i8 { width: 8px; height: 8px; }
.i10 { width: 10px; height: 9px; }
.dim { opacity: .4; }
.faint { opacity: .6; }
.gold { color: #dca535; }

/* system menu */
.menubar { display: flex; align-items: center; height: 12px; padding: 0 10px; color: #331019; background: linear-gradient(#ffb8c6, #ff93a6 80%, #a05462 90%); font-size: 7px; font-weight: 600; line-height: 10px; }
.apple { width: 8px; height: 9px; margin-right: 9px; }
.menus, .status { display: flex; align-items: center; gap: 9px; }
.strong { font-weight: 800; }
.status { margin-left: auto; gap: 6px; }
.rec { font: 4px/4px "Open Sans", sans-serif; }
.adobe { display: flex; gap: 4px; align-items: center; margin-right: 2px; }
.pale { opacity: .5; }
.wifi { width: 12px; height: 9px; }
.clock { margin: 0 3px; font-size: 8px; font-weight: 400; }
.user { margin-right: 4px; }
.list { width: 11px; height: 8px; }

/* application frame */
.window { flex: 1; min-height: 0; display: flex; flex-direction: column; border-left: 3px solid #cf3b4c; border-bottom: 2px solid #7b2c25; }
.titlebar { display: flex; align-items: center; height: 7px; flex: none; padding-left: 4px; background: linear-gradient(#efefec, #bfbfba); }
.lights { display: flex; gap: 4px; flex: 1; }
.lights i { width: 5px; height: 5px; border-radius: 3px; border: 1px solid; }
.red { color: #a5453a; background: #e48b80; }
.amber { color: #c08a20; background: #f4d27c; }
.green { color: #62913c; background: #b5dc90; }
.filename { color: #444; font-size: 5px; line-height: 7px; margin-right: 612px; }
.toolbar { display: flex; align-items: center; height: 14px; flex: none; padding: 0 4px 0 6px; background: linear-gradient(#5f5f5f, #505050); border-bottom: 1px solid #262626; }
.tool { width: 13px; height: 12px; display: grid; place-items: center; }
.tool.on { background: #333; }
.tool.gap { margin-left: 3px; }
.tool svg { width: 8px; height: 9px; }
.axes { display: flex; gap: 3px; margin-left: 24px; color: #777; }
.space { margin-left: auto; font-weight: 600; margin-right: 3px; }
.help { display: flex; align-items: center; width: 96px; height: 8px; margin-left: 4px; background: #a8a8a8; color: #222; }
.help input { flex: 1; height: 8px; margin-left: 2px; }

/* drop-downs */
.drop { position: relative; display: flex; height: 8px; background: linear-gradient(#686868, #4a4a4a); border: 1px solid #3c3c3c; border-top-color: #777; }
.drop select { flex: 1; width: 100%; appearance: none; padding-left: 3px; line-height: 6px; height: 6px; }
.drop::after { content: ""; position: absolute; right: 3px; top: 2px; border: 2px solid transparent; border-top: 3px solid #ddd; border-bottom: 0; pointer-events: none; }
.ws { width: 68px; border-color: transparent; background: none; }
.pale-drop { height: 9px; background: linear-gradient(90deg, #a9a9a9 calc(100% - 9px), #5a5a5a 0); color: #1c1c1c; border: 1px solid #333; }
.pale-drop select { line-height: 7px; height: 7px; padding-left: 1px; }

/* panels */
.desk { flex: 1; min-height: 0; display: grid; grid-template-columns: 314px 1fr 104px; gap: 1px; background: #2b2b2b; }
.panel { display: flex; flex-direction: column; min-width: 0; min-height: 0; background: #5d5d5d; overflow: hidden; }
.tabs { display: flex; height: 10px; flex: none; background: linear-gradient(#434343, #4d4d4d); }
.tab { display: flex; align-items: center; gap: 2px; padding: 0 6px; color: #8b8b8b; white-space: nowrap; }
.tab.on { background: #5d5d5d; color: #e0e0e0; border-right: 1px solid #333; }
.sp { margin-left: 2px; }
.fly { width: 9px; height: 6px; margin: 2px 4px 0 auto; opacity: .8; }
.sw { display: inline-block; width: 5px; height: 5px; flex: none; }
.white { background: #f5f5f0; }
.blue { background: #7480d4; }
.yellow { background: #d9c650; }
.lilac { background: #aaa6d8; }

/* project */
.project { border-right: 1px solid #3d3d3d; }
.preview-thumb { padding: 3px 4px; height: 56px; }
.thumb { display: block; width: 32px; height: 31px; border: 1px solid #3a3a3a; background: linear-gradient(#9a9a9a 23px, #333 23px, #333 24px, #999 24px); }
.search { display: flex; align-items: center; height: 9px; background: #9b9b9b; border: 1px solid #383838; color: #222; }
.search input { flex: 1; height: 7px; }
.project .search { width: 96px; margin-left: 4px; }
.files { width: 100%; margin-top: 4px; border-collapse: collapse; table-layout: fixed; border-top: 1px solid #444; }
.files th, .files td { padding: 0; text-align: left; height: 9px; line-height: 8px; white-space: nowrap; font-weight: 500; overflow: hidden; }
.files th { color: #bbb; font-size: 5px; border-bottom: 1px solid #444; }
.files svg { display: inline-block; vertical-align: middle; margin-right: 1px; }
.files .fold { margin: 0 3px 0 2px; width: 7px; height: 7px; }
.files .pad { padding-left: 11px; }
.files .sw { margin: 0 4px 0 10px; vertical-align: middle; }
.files .end { text-align: right; }
.comp-ic { display: inline-block; width: 7px; height: 6px; border: 1px solid #3a3a3a; border-left-color: #6b9b74; border-right-color: #ccc; margin: 0 3px 0 9px; vertical-align: middle; border-top: 0; border-bottom: 0; }
.c-name { width: 147px; }
.c-label { width: 44px; }
.c-type { width: 36px; }
.c-size { width: 24px; }
.c-dur { width: 41px; }
.footbar { display: flex; align-items: center; gap: 4px; height: 14px; flex: none; margin-top: auto; padding: 0 2px 0 3px; border-top: 1px solid #444; border-bottom: 2px solid #333; }
.bin { margin: 0 1px 0 5px; }
.scroll { display: flex; align-items: center; flex: 1; margin-right: 9px; background: #505050; height: 9px; }
.scroll i { width: 70%; height: 8px; margin-right: auto; background: #5f5f5f; border: 1px solid #444; }

/* composition */
.crumbs { padding: 1px 10px; height: 14px; }
.crumbs button { background: #444; border: 1px solid #383838; line-height: 7px; padding: 0 3px; }
.viewer { flex: 1; min-height: 0; display: flex; justify-content: center; align-items: flex-start; padding: 51px 1px 0 0; }
.canvas { width: 56%; aspect-ratio: 16 / 9; background: #050505; display: grid; place-items: start center; padding-top: 143px; }
.leg { width: 16px; height: 101px; margin-right: 8px; background: linear-gradient(#3d8bb8 50%, #5cbfe8 50%); }
.comp .footbar { gap: 2px; }
.boxed { background: #333; padding: 1px; }
.frame { width: 34px; height: 8px; background: #6a6a6a; line-height: 7px; margin: 0 2px; }
.sun { margin: 0 2px 0 3px; }
.w30 { width: 32px; }
.w41 { width: 42px; }
.w52 { width: 53px; }
.w34 { width: 34px; }

/* right column */
.info { display: flex; height: 119px; padding: 2px 4px; line-height: 7px; }
.black { width: 10px; height: 10px; margin: 7px 3px 0 1px; background: #050505; }
dl { display: grid; grid-template-columns: 9px 30px; grid-auto-rows: 7px; margin: 0; }
dd { margin: 0; }
dl.xy { grid-template-columns: 9px 20px; }
.cross { margin: 8px 3px 0 0; }
.ruled { border-top: 2px solid #333; height: 12px; }
.transport { display: flex; justify-content: space-between; padding: 4px 4px 0; height: 17px; }
.transport svg { width: 8px; height: 8px; }
.thinbar { height: 3px; flex: none; background: #3a3a3a; }
.thinbar i { display: block; width: 88%; height: 2px; background: #686868; }
.char { padding: 4px 4px 0 3px; }
.fonts { display: flex; gap: 5px; height: 23px; }
.faces { display: flex; flex-direction: column; gap: 3px; flex: 1; }
.swatches { width: 34px; height: 22px; }
.pairs { display: grid; grid-template-columns: 12px 22px 19px 15px 22px 1fr; grid-auto-rows: 10px; align-items: center; margin-top: 2px; white-space: nowrap; }
.pairs.low { margin-top: 4px; grid-auto-rows: 11px; }
.pairs b, .stroke b { font-weight: 600; }
.faded { color: #8b8b8b; }
.stroke { display: flex; align-items: center; margin-top: 6px; height: 9px; border-top: 1px solid #555; }
.stroke b { width: 12px; }
.stroke > span:nth-child(2) { width: 22px; }
.stroke .drop { flex: 1; margin-left: 2px; }
.faux { display: flex; justify-content: space-between; padding: 8px 9px 0 12px; font-weight: 700; }

/* timeline */
.lower { flex: none; height: 274px; display: grid; grid-template-columns: 1fr 104px; gap: 2px; background: #2b2b2b; }
.timeline { position: relative; display: flex; flex-direction: column; min-width: 0; min-height: 0; background: #585858; border-right: 1px solid #8a7444; }
.timeline .tabs { border-bottom: 1px solid #8a7336; }
.timeline .tab.on { border: 1px solid #8a7336; border-bottom: 0; padding: 0 5px; }
.thead { display: flex; height: 25px; flex: none; }
.left { width: 316px; }
.tools { display: flex; align-items: center; height: 17px; padding: 0 4px 0 6px; }
.time { font-size: 8px; font-weight: 700; color: #e0a92c; width: 34px; }
.tools .search { width: 95px; }
.icons { display: flex; align-items: center; gap: 6px; margin-left: auto; }
.icons svg:first-child { width: 10px; height: 8px; }
.icons .boxed svg { width: 8px; height: 8px; }
.row-grid { display: grid; grid-template-columns: 12px 9px 12px 103px 88px 56px 36px 1fr; align-items: center; min-height: 0; white-space: nowrap; }
.cols { height: 8px; font-size: 5px; color: #c4c4c4; background: #646464; border-top: 1px solid #505050; }
.cols > span:nth-child(6) { margin-left: -3px; }
.av { display: flex; padding-left: 3px; }
.cols .nm { padding-left: 6px; gap: 6px; }
.title { margin-left: 4px; }
.ruler { flex: 1; display: flex; flex-direction: column; padding-top: 3px; }
.work { height: 4px; background: linear-gradient(90deg, #b98a35 12px, #8c8c8c 12px); border: 1px solid #6d6d60; }
.ticks { flex: 1; display: grid; grid-template-columns: repeat(20, 1fr); padding: 0 3px 0 4px; text-align: center; color: #b2b2b2; background: #5a5a5a; border-bottom: 1px solid #444; }
.ticks span { background: linear-gradient(#aaa, #aaa) center bottom / 1px 2px no-repeat; }
.band { height: 7px; background: #8f8f8f; }
.gutter { width: 8px; padding: 16px 1px 0; border-left: 1px solid #333; }
.body { flex: 1; min-height: 0; display: flex; overflow: hidden; }
.rows { flex: 1; min-width: 0; min-height: 0; display: grid; grid-template-rows: repeat(27, minmax(0, 1fr)); }
.row { border-bottom: 1px solid #505050; line-height: 7px; }
.row > span:first-child { padding-left: 3px; }
.row.layer { background: #5e5e5e; }
.row .drop { height: 7px; }
.row .drop select { height: 5px; line-height: 5px; }
.row .drop::after { top: 1px; }
.cell { height: 6px; border: 1px solid #515151; }
.cell svg { margin-top: -1px; }
.eye { width: 7px; height: 5px; opacity: .8; }
.nm { display: flex; align-items: center; gap: 2px; }
.row .nm .i6:first-child { width: 5px; height: 5px; margin-right: 1px; opacity: .7; }
.row .nm .sw-ic:first-child { width: 6px; height: 6px; margin-right: 0; opacity: .9; }
.l0 { padding-left: 3px; gap: 3px; }
.l0 b { width: 12px; }
.l1 { padding-left: 12px; }
.l2 { padding-left: 21px; }
.l3 { padding-left: 29px; }
.l4 { padding-left: 46px; }
.sws { display: flex; gap: 2px; align-items: center; }
.row .sws svg:first-child { width: 5px; height: 4px; }
.row .sws svg:nth-child(2) { opacity: .5; }
.cells { width: 24px; height: 6px; margin-left: 14px; background: repeating-linear-gradient(90deg, #505050 0 1px, transparent 1px 8px); }
.adds { display: flex; gap: 2px; padding-left: 60px; }
.mode { width: 70px; }
.paths { width: 16px; height: 7px; }
.par { display: flex; gap: 3px; align-items: center; padding-right: 5px; }
.par > svg { opacity: .6; }
.par .drop { flex: 1; }
.row .gold { display: flex; align-items: center; }
.chain { width: 8px; height: 6px; margin-right: 2px; }
.lane { align-self: stretch; background: #6a6a6a; border-left: 1px solid #444; }
.lane.bar { background: #4c59c6; }
.lane.soft { background: #8580ad; }
.vscroll { width: 8px; display: flex; flex-direction: column; align-items: center; gap: 2px; padding: 2px 0; border-left: 1px solid #333; background: #5c5f5c; }
.vscroll i { flex: 1; }
.tfoot { display: flex; align-items: center; height: 9px; flex: none; background: #515451; border-top: 1px solid #404040; }
.toggles { display: flex; gap: 2px; width: 136px; padding-left: 3px; }
.tfoot button { width: 80px; height: 7px; line-height: 7px; background: #626262; border: 1px solid #454545; border-width: 0 1px; }
.hscroll { display: flex; align-items: center; gap: 4px; flex: 1; padding-left: 99px; padding-right: 8px; }
.small { width: 4px; height: 1px; background: #aaa; }
.large { width: 22px; height: 2px; background: #222; margin-left: 6px; }
.track { flex: 1; height: 7px; border-left: 1px solid #333; }
.tooltip { position: absolute; left: 82px; top: 110px; width: 246px; padding: 1px 3px; background: #fbfac3; color: #222; border: 1px solid #77775a; font: 6px/7px "Liberation Sans", Arial, sans-serif; }
.pointer { position: absolute; left: 83px; top: 101px; width: 5px; height: 7px; }

/* paragraph */
.aligns { display: flex; justify-content: space-between; padding: 2px 7px 0 3px; }
.aligns button { width: 10px; height: 10px; display: grid; place-items: center; }
.aligns .on { background: #383838; }
.aligns svg { width: 8px; height: 8px; }
.indents { display: grid; grid-template-columns: 39px 35px 1fr; grid-auto-rows: 9px; padding: 5px 0 0 2px; align-items: center; }
.indents span { display: flex; gap: 1px; white-space: nowrap; }
.indents svg { width: 10px; height: 8px; }

/* marks laid over the frame */
.overlay { position: absolute; inset: 0; width: 100%; height: 100%; pointer-events: none; }
.dashes { fill: none; stroke: rgb(86 86 86 / .42); stroke-width: 2; stroke-dasharray: 8 6; }
.marks { fill: rgb(66 88 84 / .46); }
.cn { font: 16px "Noto Sans CJK SC", sans-serif; }
.url { font: 13px "Open Sans", sans-serif; }
.site { font: 300 30px "Open Sans", sans-serif; fill: #c8c8c8; stroke: #777; stroke-width: 1px; paint-order: stroke; }
.brand { font: 900 33px "Noto Sans CJK SC", sans-serif; fill: url(#silver); stroke: #555; stroke-width: 1px; paint-order: stroke; }
```
